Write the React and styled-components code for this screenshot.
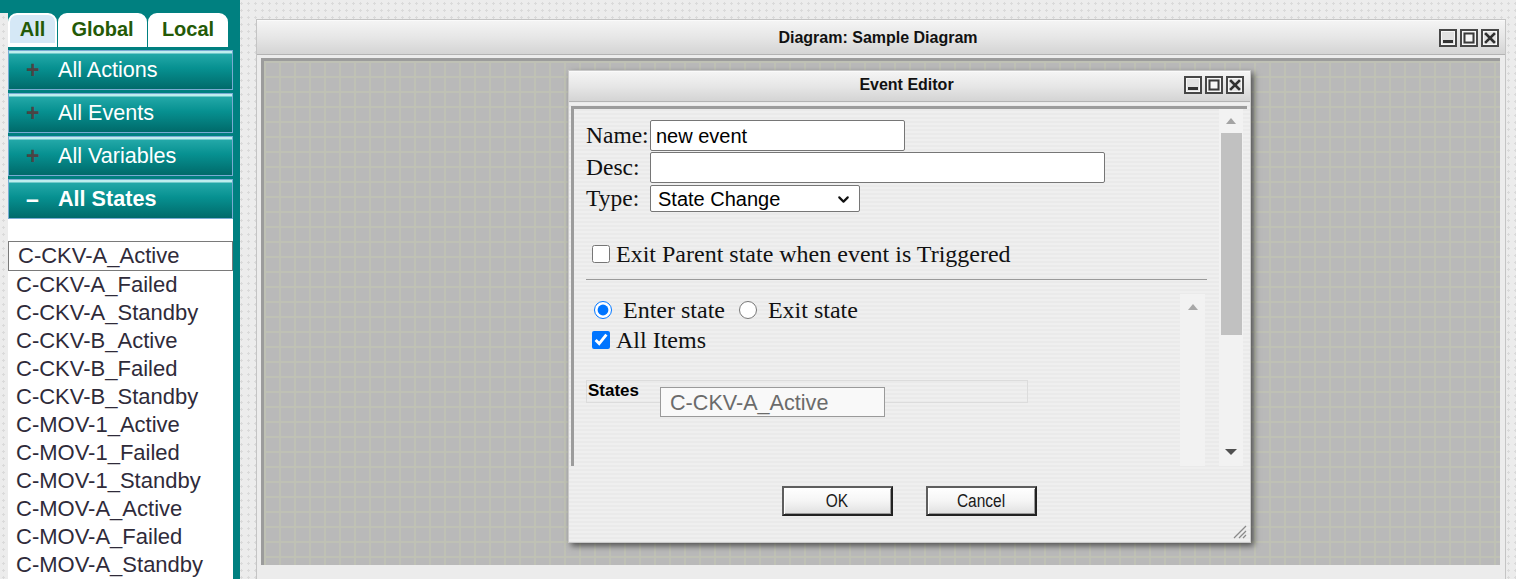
import React from 'react';
import styled, { createGlobalStyle } from 'styled-components';
import { ChevronDown } from 'lucide-react';

const GlobalStyle = createGlobalStyle`
  html, body {
    margin: 0;
    padding: 0;
    height: 100%;
    overflow: hidden;
  }
  body {
    font-family: "Liberation Sans", Arial, sans-serif;
    background-color: #ececec;
    background-image: radial-gradient(#dadada 1px, transparent 1.3px);
    background-size: 7px 7px;
  }
`;

const Page = styled.div`
  display: flex;
  height: 579px;
  overflow: hidden;
`;

// ---------- sidebar ----------
const Sidebar = styled.div`
  width: 240px;
  flex-shrink: 0;
  box-sizing: border-box;
  padding: 13px 7px 0 8px;
  display: flex;
  flex-direction: column;
  background:
    linear-gradient(#008080, #008080) 0 0 / 100% 13px no-repeat,
    linear-gradient(to right, transparent 8px, #008080 8px);
`;

const Tabs = styled.div`
  display: flex;
  gap: 1px;
  height: 34px;
  margin-bottom: 3px;
`;

const Tab = styled.div`
  box-sizing: border-box;
  width: ${p => p.w}px;
  border: 2px solid #fff;
  border-bottom-width: 4px;
  border-radius: 9px 9px 0 0;
  background: ${p => (p.active ? '#d5e8f6' : '#fff')};
  color: #245a06;
  font-weight: 700;
  font-size: 20px;
  display: flex;
  align-items: center;
  justify-content: center;
`;

const Header = styled.div`
  height: 40px;
  box-sizing: border-box;
  margin-bottom: 3px;
  display: flex;
  align-items: center;
  border: 1px solid #79abd3;
  background: linear-gradient(
    to bottom,
    #bfeeee 0,
    #bfeeee 2px,
    #23a8a8 3px,
    #079191 45%,
    #006a6a 100%
  );
  color: #fff;
  font-size: 21.6px;
  font-weight: ${p => (p.open ? 700 : 400)};
`;

const Sign = styled.span`
  width: 32px;
  margin-left: 17px;
  font-weight: 700;
  font-size: 23px;
  color: ${p => (p.open ? '#fff' : '#4a4444')};
`;

const StateList = styled.div`
  flex: 1;
  background: #fff;
  margin-top: -3px;
  padding-top: 22px;
`;

const StateItem = styled.div`
  height: ${p => (p.selected ? 30 : 28)}px;
  box-sizing: border-box;
  line-height: 28px;
  padding-left: ${p => (p.selected ? 9 : 8)}px;
  border: ${p => (p.selected ? '1px solid #7a7a7a' : 'none')};
  font-size: 22px;
  color: #2f2b3a;
  white-space: nowrap;
`;

// ---------- diagram window ----------
const Main = styled.div`
  flex: 1;
  padding: 19px 10px 0 16px;
`;

const Window = styled.div`
  height: 600px;
  box-sizing: border-box;
  border: 1px solid #c4c4c4;
  background: #ececec;
  display: flex;
  flex-direction: column;
`;

const TitleBar = styled.div`
  height: ${p => p.h}px;
  flex-shrink: 0;
  box-sizing: border-box;
  display: grid;
  grid-template-columns: 1fr auto 1fr;
  align-items: center;
  padding: 0 ${p => p.pr}px ${p => p.pb || 0}px 0;
  border-top: 1px solid #fafafa;
  border-bottom: 1px solid #b3b3b3;
  background: linear-gradient(to bottom, #f4f4f4 0%, #e6e6e6 50%, #d4d4d4 100%);
  font-weight: 700;
  font-size: 16px;
  color: #111;
`;

const Controls = styled.div`
  justify-self: end;
  display: flex;
  gap: 3px;
`;

const Canvas = styled.div`
  position: relative;
  height: 507px;
  box-sizing: border-box;
  margin: 3px 5px 0 4px;
  border-top: 3px solid #9c9c9c;
  border-left: 3px solid #9c9c9c;
  background-color: #b9b9b9;
  background-image:
    linear-gradient(to right, #bfc1b5 2px, transparent 2px),
    linear-gradient(to bottom, #bfc1b5 2px, transparent 2px);
  background-size: 15px 15px;
`;

// ---------- event editor dialog ----------
const Dialog = styled.div`
  position: absolute;
  left: 304px;
  top: 9px;
  width: 683px;
  height: 473px;
  box-sizing: border-box;
  border: 1px solid #c9c9c9;
  box-shadow: 3px 3px 6px rgba(0, 0, 0, 0.55);
  background: repeating-linear-gradient(to bottom, #efefef 0 2px, #eaeaea 2px 4px);
  display: flex;
  flex-direction: column;
`;

const Frame = styled.div`
  height: 360px;
  box-sizing: border-box;
  margin: 4px 3px 0 2px;
  border-top: 3px solid #9c9c9c;
  border-left: 3px solid #9c9c9c;
  display: flex;
`;

const FormArea = styled.div`
  flex: 1;
  padding: 11px 12px 0 12px;
  display: flex;
  flex-direction: column;
  min-width: 0;
`;

const FieldRow = styled.div`
  display: flex;
  align-items: center;
  height: ${p => p.h}px;
  margin-top: ${p => p.mt || 0}px;
`;

const Label = styled.span`
  width: 64px;
  font-family: "Liberation Serif", "Times New Roman", serif;
  font-size: 23.5px;
  color: #111;
`;

const TextInput = styled.div`
  width: ${p => p.w}px;
  height: 100%;
  box-sizing: border-box;
  border: 1px solid #767676;
  border-radius: 2px;
  background: #fff;
  padding: 2px 0 0 5px;
  font-size: 20px;
  line-height: 27px;
  color: #000;
`;

const SelectBox = styled.div`
  width: 210px;
  height: 100%;
  box-sizing: border-box;
  border: 1px solid #767676;
  border-radius: 2px;
  background: #fff;
  padding: 1px 7px 0;
  display: flex;
  align-items: center;
  justify-content: space-between;
  font-size: 20px;
  color: #000;
`;

const OptionRow = styled.div`
  display: flex;
  align-items: center;
  height: ${p => p.h || 26}px;
  margin-top: ${p => p.mt || 0}px;
  font-family: "Liberation Serif", "Times New Roman", serif;
  font-size: 24px;
  color: #111;
`;

const Check = styled.input`
  margin: 0 0 0 ${p => p.ml}px;
  width: 18px;
  height: 18px;
  accent-color: #0075ff;
`;

const OptionText = styled.span`
  margin-left: ${p => p.ml}px;
`;

const Rule = styled.div`
  height: 1px;
  margin-top: 12px;
  background: #9a9a9a;
`;

const Inner = styled.div`
  flex: 1;
  display: flex;
  margin-top: 14px;
`;

const InnerContent = styled.div`
  flex: 1;
  padding-top: 3px;
`;

const StatesBar = styled.div`
  width: 442px;
  height: 23px;
  box-sizing: border-box;
  margin-top: 27px;
  border: 1px solid #dcdcdc;
  display: flex;
  align-items: flex-start;
`;

const StatesLabel = styled.span`
  width: 72px;
  padding-left: 1px;
  font-weight: 700;
  font-size: 17px;
  line-height: 20px;
  color: #000;
`;

const DisabledInput = styled.div`
  width: 225px;
  height: 30px;
  flex-shrink: 0;
  box-sizing: border-box;
  margin-top: 6px;
  border: 1px solid #9a9a9a;
  background: #f9f9f9;
  padding-left: 9px;
  font-size: 21.6px;
  line-height: 29px;
  color: #6b6b6b;
`;

const ScrollTrack = styled.div`
  width: ${p => p.w}px;
  flex-shrink: 0;
  margin-right: ${p => p.mr}px;
  background: #f2f2f2;
  display: flex;
  flex-direction: column;
  align-items: center;
`;

const ArrowCell = styled.div`
  height: ${p => p.h}px;
  display: flex;
  align-items: center;
  justify-content: center;
  margin-top: ${p => (p.bottom ? 'auto' : 0)};
`;

const Thumb = styled.div`
  width: 21px;
  height: 202px;
  background: #c1c1c1;
`;

const Footer = styled.div`
  flex: 1;
  position: relative;
  display: flex;
  justify-content: center;
  align-items: flex-start;
  gap: 33px;
  padding-top: 20px;
`;

const Button = styled.div`
  width: 111px;
  height: 30px;
  box-sizing: border-box;
  border: 2px solid;
  border-color: #5e5e5e #222 #222 #5e5e5e;
  background: linear-gradient(to bottom, #ffffff 0%, #f5f5f5 50%, #e0e0e0 100%);
  box-shadow: inset 1px 1px 0 #fff, inset -1px -1px 0 #9a9a9a;
  display: flex;
  align-items: center;
  justify-content: center;
  font-size: 18px;
  color: #1a1a1a;
`;

const Narrow = styled.span`
  display: inline-block;
  transform: scaleX(0.86);
`;

const Grip = styled.div`
  position: absolute;
  right: 3px;
  bottom: 3px;
  width: 16px;
  height: 16px;
`;

const WinButton = ({ kind }) => (
  <svg width="18" height="18" viewBox="0 0 18 18">
    <rect x="1" y="1" width="16" height="16" fill="#e2e2e2" stroke="#474747" strokeWidth="2" />
    <rect x="2.5" y="2.5" width="13" height="13" fill="none" stroke="#f8f8f8" strokeWidth="1" />
    {kind === 'min' && <rect x="4" y="11" width="10" height="3" fill="#333" />}
    {kind === 'max' && (
      <rect x="4.5" y="4.5" width="9" height="9" fill="#f7f7f7" stroke="#3a3a3a" strokeWidth="2" />
    )}
    {kind === 'close' && (
      <path d="M5 5 L13 13 M13 5 L5 13" stroke="#2f2f2f" strokeWidth="2.6" strokeLinecap="square" />
    )}
  </svg>
);

const WinControls = () => (
  <Controls>
    <WinButton kind="min" />
    <WinButton kind="max" />
    <WinButton kind="close" />
  </Controls>
);

const Arrow = ({ up, color, w = 10 }) => (
  <svg width={w} height="6" viewBox={`0 0 ${w} 6`}>
    <polygon points={up ? `0,6 ${w},6 ${w / 2},0` : `0,0 ${w},0 ${w / 2},6`} fill={color} />
  </svg>
);

const states = [
  'C-CKV-A_Active',
  'C-CKV-A_Failed',
  'C-CKV-A_Standby',
  'C-CKV-B_Active',
  'C-CKV-B_Failed',
  'C-CKV-B_Standby',
  'C-MOV-1_Active',
  'C-MOV-1_Failed',
  'C-MOV-1_Standby',
  'C-MOV-A_Active',
  'C-MOV-A_Failed',
  'C-MOV-A_Standby',
];

const groups = ['All Actions', 'All Events', 'All Variables'];

export default function App() {
  return (
    <>
      <GlobalStyle />
      <Page>
        <Sidebar>
          <Tabs>
            <Tab w={49} active>All</Tab>
            <Tab w={89}>Global</Tab>
            <Tab w={80}>Local</Tab>
          </Tabs>
          {groups.map(g => (
            <Header key={g}>
              <Sign>+</Sign>
              {g}
            </Header>
          ))}
          <Header open>
            <Sign open>–</Sign>
            All States
          </Header>
          <StateList>
            {states.map((s, i) => (
              <StateItem key={s} selected={i === 0}>
                {s}
              </StateItem>
            ))}
          </StateList>
        </Sidebar>

        <Main>
          <Window>
            <TitleBar h={35} pr={6}>
              <span />
              <span>Diagram: Sample Diagram</span>
              <WinControls />
            </TitleBar>
            <Canvas>
              <Dialog>
                <TitleBar h={31} pr={6} pb={3}>
                  <span />
                  <span>Event Editor</span>
                  <WinControls />
                </TitleBar>
                <Frame>
                  <FormArea>
                    <FieldRow h={31}>
                      <Label>Name:</Label>
                      <TextInput w={255}>new event</TextInput>
                    </FieldRow>
                    <FieldRow h={31} mt={1}>
                      <Label>Desc:</Label>
                      <TextInput w={455} />
                    </FieldRow>
                    <FieldRow h={27} mt={2}>
                      <Label>Type:</Label>
                      <SelectBox>
                        State Change
                        <ChevronDown size={17} strokeWidth={3} color="#111" />
                      </SelectBox>
                    </FieldRow>
                    <OptionRow mt={29}>
                      <Check type="checkbox" ml={6} />
                      <OptionText ml={6}>Exit Parent state when event is Triggered</OptionText>
                    </OptionRow>
                    <Rule />
                    <Inner>
                      <InnerContent>
                        <OptionRow>
                          <Check type="radio" name="when" defaultChecked ml={8} />
                          <OptionText ml={11}>Enter state</OptionText>
                          <Check type="radio" name="when" ml={14} />
                          <OptionText ml={11}>Exit state</OptionText>
                        </OptionRow>
                        <OptionRow mt={4}>
                          <Check type="checkbox" defaultChecked ml={6} />
                          <OptionText ml={6}>All Items</OptionText>
                        </OptionRow>
                        <StatesBar>
                          <StatesLabel>States</StatesLabel>
                          <DisabledInput>C-CKV-A_Active</DisabledInput>
                        </StatesBar>
                      </InnerContent>
                      <ScrollTrack w={25} mr={2}>
                        <ArrowCell h={26}>
                          <Arrow up color="#a8a8a8" w={10} />
                        </ArrowCell>
                      </ScrollTrack>
                    </Inner>
                  </FormArea>
                  <ScrollTrack w={24} mr={4}>
                    <ArrowCell h={24}>
                      <Arrow up color="#a3a3a3" w={10} />
                    </ArrowCell>
                    <Thumb />
                    <ArrowCell h={28} bottom>
                      <Arrow color="#505050" w={12} />
                    </ArrowCell>
                  </ScrollTrack>
                </Frame>
                <Footer>
                  <Button>
                    <Narrow>OK</Narrow>
                  </Button>
                  <Button>
                    <Narrow>Cancel</Narrow>
                  </Button>
                  <Grip>
                    <svg width="16" height="16" viewBox="0 0 16 16">
                      <path d="M15 3 L3 15 M15 8 L8 15 M15 12 L12 15" stroke="#8a8a8a" strokeWidth="1.3" />
                    </svg>
                  </Grip>
                </Footer>
              </Dialog>
            </Canvas>
          </Window>
        </Main>
      </Page>
    </>
  );
}
